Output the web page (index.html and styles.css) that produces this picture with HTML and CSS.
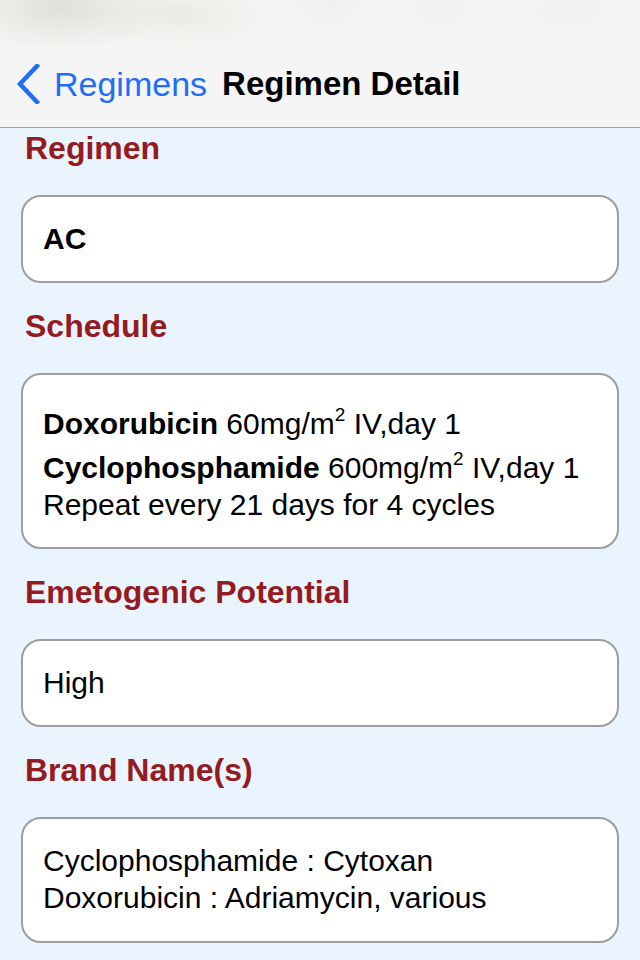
FILE: index.html
```html
<!DOCTYPE html>
<html lang="en">
<head>
<meta charset="utf-8">
<title>Regimen Detail</title>
<link rel="stylesheet" href="styles.css">
</head>
<body>
<header class="navbar">
  <div class="nav-row">
    <a class="back" href="#">
      <svg class="chevron" width="24" height="40" viewBox="0 0 24 40" aria-hidden="true">
        <path d="M21 2 L4 20 L21 38" fill="none" stroke="#1f6ef8" stroke-width="4.5" stroke-linecap="square" stroke-linejoin="miter"/>
      </svg>
      <span class="back-label">Regimens</span>
    </a>
    <h1 class="nav-title">Regimen Detail</h1>
  </div>
</header>
<main class="content">
  <h2 class="section-title">Regimen</h2>
  <div class="card">
    <div class="line"><b>AC</b></div>
  </div>

  <h2 class="section-title">Schedule</h2>
  <div class="card">
    <div class="line has-sup"><b>Doxorubicin</b> 60mg/m<sup>2</sup> IV,day 1</div>
    <div class="line has-sup"><b>Cyclophosphamide</b> 600mg/m<sup>2</sup> IV,day 1</div>
    <div class="line">Repeat every 21 days for 4 cycles</div>
  </div>

  <h2 class="section-title">Emetogenic Potential</h2>
  <div class="card">
    <div class="line">High</div>
  </div>

  <h2 class="section-title">Brand Name(s)</h2>
  <div class="card card-multi">
    <div class="line">Cyclophosphamide : Cytoxan</div>
    <div class="line">Doxorubicin : Adriamycin, various</div>
  </div>
</main>
</body>
</html>
```
FILE: styles.css
```css
html, body {
  margin: 0;
  padding: 0;
}
body {
  width: 640px;
  height: 960px;
  overflow: hidden;
  background: #eaf4fe;
  font-family: "Liberation Sans", Arial, sans-serif;
  color: #000;
}
.navbar {
  height: 127px;
  border-bottom: 1px solid #a3a3a5;
  background:
    radial-gradient(ellipse 110px 45px at 60px 8px, rgba(222,222,214,0.9), rgba(245,245,245,0) 100%),
    radial-gradient(ellipse 90px 35px at 180px 15px, rgba(232,232,224,0.8), rgba(245,245,245,0) 100%),
    radial-gradient(ellipse 60px 25px at 330px 5px, rgba(238,238,238,0.8), rgba(245,245,245,0) 100%),
    radial-gradient(ellipse 60px 30px at 440px 8px, rgba(238,238,238,0.7), rgba(245,245,245,0) 100%),
    radial-gradient(ellipse 70px 25px at 570px 10px, rgba(238,238,238,0.7), rgba(245,245,245,0) 100%),
    #f5f5f5;
  display: flex;
  flex-direction: column;
  justify-content: flex-end;
}
.nav-row {
  height: 86px;
  display: flex;
  align-items: center;
  padding-left: 16px;
  gap: 15px;
}
.back {
  display: flex;
  align-items: center;
  gap: 14px;
  text-decoration: none;
  color: #1f6ef8;
}
.chevron {
  display: block;
}
.back-label {
  font-size: 34px;
  color: #1f6ef8;
}
.nav-title {
  margin: 0;
  font-size: 33px;
  font-weight: bold;
  color: #000;
}
.content {
  padding: 2px 21px 0;
}
.section-title {
  margin: 0;
  padding-left: 4px;
  font-size: 32px;
  line-height: 36px;
  font-weight: bold;
  color: #941b22;
}
.card {
  margin: 29px 0 25px;
  background: #fff;
  border: 2px solid #9d9d9d;
  border-radius: 20px;
  padding: 23px 20px 24px;
}
.card-multi {
  padding-bottom: 25px;
}
.card .line {
  font-size: 30px;
  line-height: 37px;
  white-space: nowrap;
}
.card .line.has-sup {
  padding-top: 7px;
}
sup {
  font-size: 19px;
  line-height: 0;
  vertical-align: 13px;
}
```
